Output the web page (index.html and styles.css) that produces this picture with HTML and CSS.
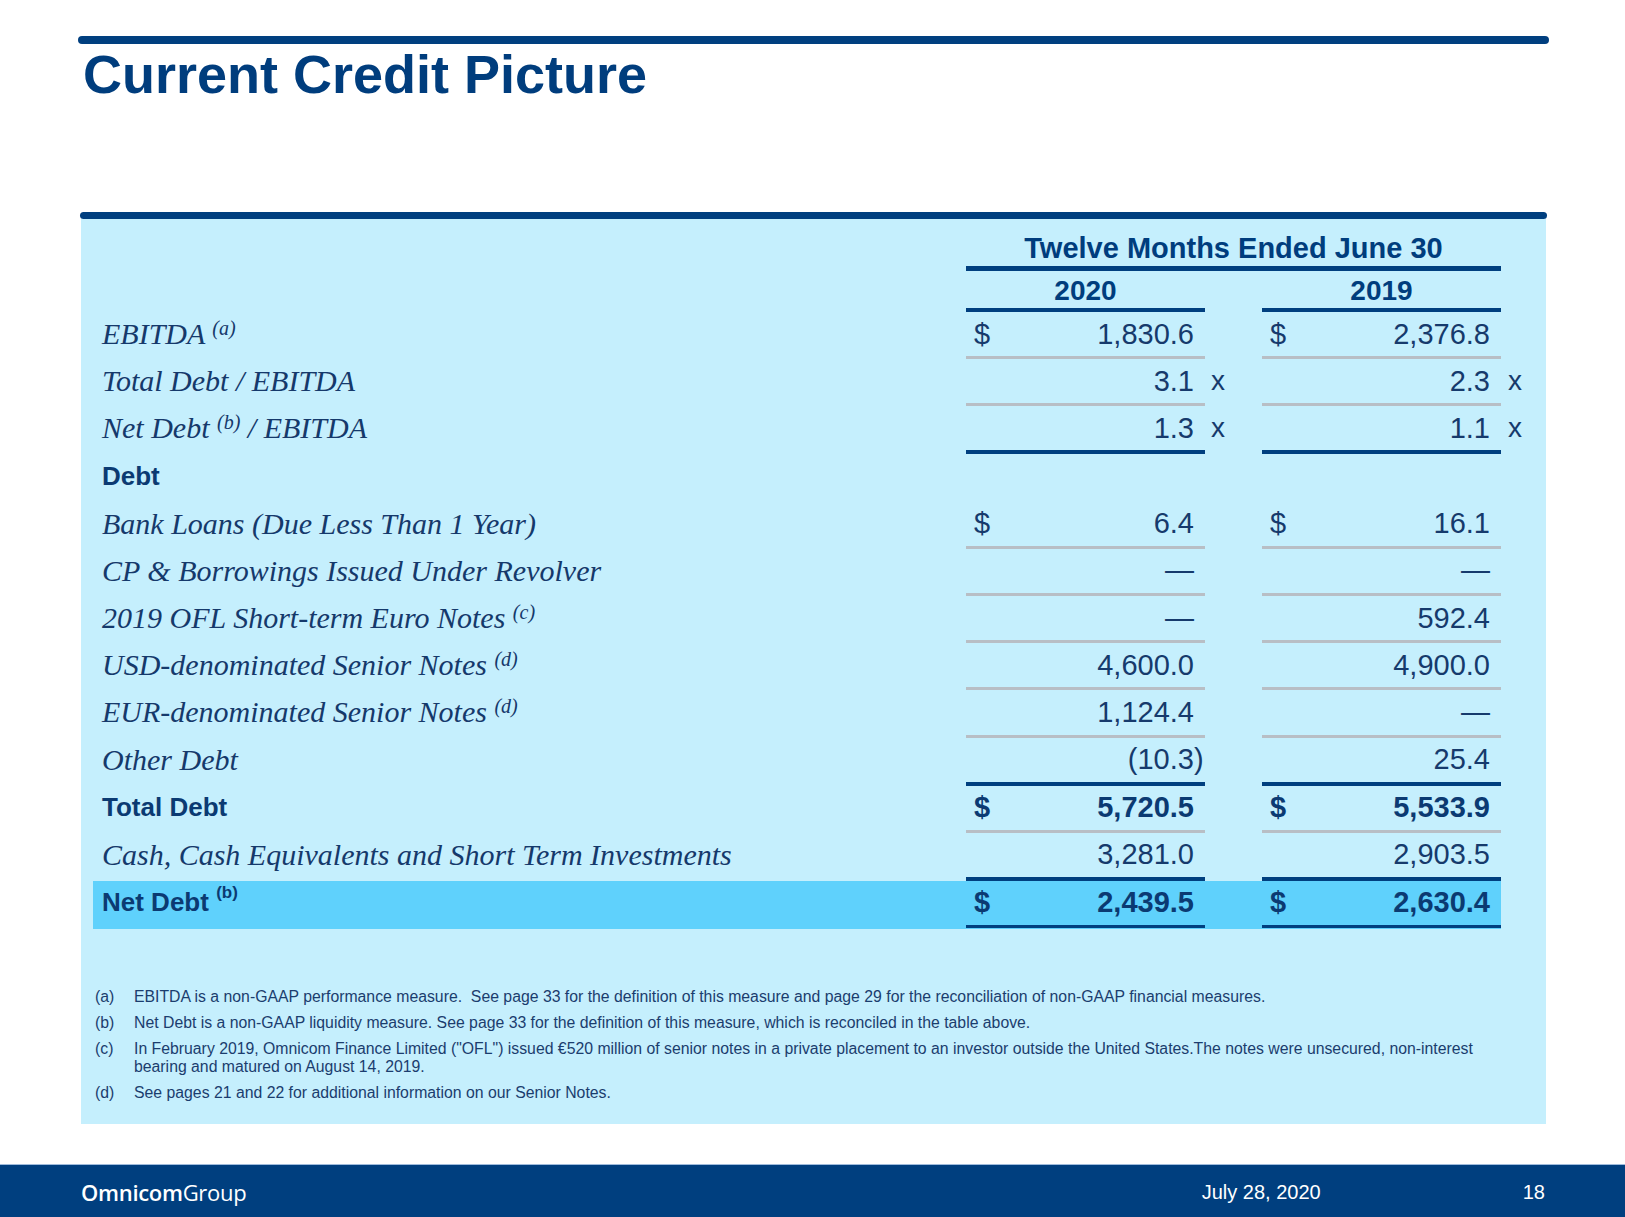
FILE: index.html
```html
<!DOCTYPE html>
<html lang="en">
<head>
<meta charset="utf-8">
<title>Current Credit Picture</title>
<link rel="stylesheet" href="styles.css">
</head>
<body>
<div class="slide">
  <div class="rule-top"></div>
  <h1 class="title">Current Credit Picture</h1>

  <div class="panel-bar"></div>
  <section class="panel">
    <div class="table">
      <div class="row head1">
        <div></div>
        <div class="period">Twelve Months Ended June 30</div>
        <div></div>
      </div>
      <div class="row head2">
        <div></div>
        <div class="yr">2020</div>
        <div></div>
        <div class="yr">2019</div>
        <div></div>
      </div>

      <div class="row">
        <div class="lbl"><span>EBITDA <sup>(a)</sup></span></div>
        <div class="num"><span>$</span><span>1,830.6</span></div>
        <div class="sfx"></div>
        <div class="num"><span>$</span><span>2,376.8</span></div>
        <div class="sfx"></div>
      </div>
      <div class="row">
        <div class="lbl"><span>Total Debt / EBITDA</span></div>
        <div class="num"><span></span><span>3.1</span></div>
        <div class="sfx">x</div>
        <div class="num"><span></span><span>2.3</span></div>
        <div class="sfx">x</div>
      </div>
      <div class="row dark">
        <div class="lbl"><span>Net Debt <sup>(b)</sup> / EBITDA</span></div>
        <div class="num"><span></span><span>1.3</span></div>
        <div class="sfx">x</div>
        <div class="num"><span></span><span>1.1</span></div>
        <div class="sfx">x</div>
      </div>
      <div class="row blank">
        <div class="lbl strong"><span>Debt</span></div>
        <div class="num"></div>
        <div class="sfx"></div>
        <div class="num"></div>
        <div class="sfx"></div>
      </div>
      <div class="row">
        <div class="lbl"><span>Bank Loans (Due Less Than 1 Year)</span></div>
        <div class="num"><span>$</span><span>6.4</span></div>
        <div class="sfx"></div>
        <div class="num"><span>$</span><span>16.1</span></div>
        <div class="sfx"></div>
      </div>
      <div class="row">
        <div class="lbl"><span>CP &amp; Borrowings Issued Under Revolver</span></div>
        <div class="num"><span></span><span>—</span></div>
        <div class="sfx"></div>
        <div class="num"><span></span><span>—</span></div>
        <div class="sfx"></div>
      </div>
      <div class="row">
        <div class="lbl"><span>2019 OFL Short-term Euro Notes <sup>(c)</sup></span></div>
        <div class="num"><span></span><span>—</span></div>
        <div class="sfx"></div>
        <div class="num"><span></span><span>592.4</span></div>
        <div class="sfx"></div>
      </div>
      <div class="row">
        <div class="lbl"><span>USD-denominated Senior Notes <sup>(d)</sup></span></div>
        <div class="num"><span></span><span>4,600.0</span></div>
        <div class="sfx"></div>
        <div class="num"><span></span><span>4,900.0</span></div>
        <div class="sfx"></div>
      </div>
      <div class="row">
        <div class="lbl"><span>EUR-denominated Senior Notes <sup>(d)</sup></span></div>
        <div class="num"><span></span><span>1,124.4</span></div>
        <div class="sfx"></div>
        <div class="num"><span></span><span>—</span></div>
        <div class="sfx"></div>
      </div>
      <div class="row dark">
        <div class="lbl"><span>Other Debt</span></div>
        <div class="num"><span></span><span>(10.3<span class="paren">)</span></span></div>
        <div class="sfx"></div>
        <div class="num"><span></span><span>25.4</span></div>
        <div class="sfx"></div>
      </div>
      <div class="row total">
        <div class="lbl strong"><span>Total Debt</span></div>
        <div class="num"><span>$</span><span>5,720.5</span></div>
        <div class="sfx"></div>
        <div class="num"><span>$</span><span>5,533.9</span></div>
        <div class="sfx"></div>
      </div>
      <div class="row dark">
        <div class="lbl"><span>Cash, Cash Equivalents and Short Term Investments</span></div>
        <div class="num"><span></span><span>3,281.0</span></div>
        <div class="sfx"></div>
        <div class="num"><span></span><span>2,903.5</span></div>
        <div class="sfx"></div>
      </div>
      <div class="row net">
        <div class="lbl strong"><span>Net Debt <sup>(b)</sup></span></div>
        <div class="num"><span>$</span><span>2,439.5</span></div>
        <div class="sfx"></div>
        <div class="num"><span>$</span><span>2,630.4</span></div>
        <div class="sfx"></div>
      </div>
    </div>

    <ol class="notes">
      <li><span class="mark">(a)</span><span>EBITDA is a non-GAAP performance measure.&nbsp; See page 33 for the definition of this measure and page 29 for the reconciliation of non-GAAP financial measures.</span></li>
      <li><span class="mark">(b)</span><span>Net Debt is a non-GAAP liquidity measure. See page 33 for the definition of this measure, which is reconciled in the table above.</span></li>
      <li><span class="mark">(c)</span><span>In February 2019, Omnicom Finance Limited ("OFL") issued €520 million of senior notes in a private placement to an investor outside the United States.The notes were unsecured, non-interest<br>bearing and matured on August 14, 2019.</span></li>
      <li><span class="mark">(d)</span><span>See pages 21 and 22 for additional information on our Senior Notes.</span></li>
    </ol>
  </section>

  <footer class="footer">
    <div class="logo"><b>Omnicom</b>Group</div>
    <div class="date">July 28, 2020</div>
    <div class="page-no">18</div>
  </footer>
</div>
</body>
</html>
```

FILE: styles.css
```css
html, body {
  margin: 0;
  padding: 0;
  background: #ffffff;
  overflow: hidden;
}

.slide {
  width: 1625px;
  height: 1217px;
  font-family: "Liberation Sans", Arial, sans-serif;
  color: #163a6c;
}

.rule-top {
  margin: 36px 0 0 78px;
  width: 1471px;
  height: 8px;
  border-radius: 4px;
  background: #003f7f;
}

.title {
  margin: 0 0 0 83px;
  font-family: "Liberation Sans", Arial, sans-serif;
  font-size: 54px;
  line-height: 60px;
  font-weight: bold;
  color: #003d7d;
}

.panel-bar {
  margin: 108px 0 0 80px;
  width: 1467px;
  height: 7px;
  border-radius: 3.5px;
  background: #003f7f;
}

.panel {
  margin-left: 81px;
  width: 1465px;
  box-sizing: border-box;
  padding: 12px 0 22px 12px;
  background: #c5effd;
}

/* ---- table ---- */
.row {
  display: grid;
  grid-template-columns: 873px 239px 57px 239px 45px;
  height: 47.2px;
}

.row > div {
  box-sizing: border-box;
  border-bottom: 3px solid transparent;
  display: flex;
  align-items: center;
  white-space: nowrap;
}

.head1 {
  grid-template-columns: 873px 535px 45px;
  height: 40px;
}
.head1 > div {
  border-bottom: 0;
}
.head1 .period {
  justify-content: center;
  align-items: flex-start;
  font-size: 29px;
  line-height: 34px;
  font-weight: bold;
  color: #003d7d;
  border-bottom: 5px solid #003f7f;
  padding-bottom: 1px;
}

.head2 {
  height: 41px;
}
.head2 > div {
  border-bottom: 0;
}
.head2 .yr {
  justify-content: center;
  align-items: flex-start;
  padding-top: 3px;
  font-size: 28px;
  line-height: 34px;
  font-weight: bold;
  color: #003d7d;
  border-bottom: 4px solid #003f7f;
}

.lbl {
  padding-left: 9px;
  font-family: "Liberation Serif", "Times New Roman", serif;
  font-style: italic;
  font-size: 30px;
  color: #15396b;
}

.lbl sup {
  font-size: 20px;
  line-height: 0;
  vertical-align: 9px;
}

.lbl.strong {
  font-family: "Liberation Sans", Arial, sans-serif;
  font-style: normal;
  font-weight: bold;
  font-size: 26px;
  color: #0b3a72;
}

.lbl.strong sup {
  font-size: 17px;
  vertical-align: 13px;
}

.num {
  justify-content: space-between;
  padding: 0 11px 0 8px;
  font-size: 29px;
  color: #163a6c;
  border-bottom-color: #b8bec5 !important;
}

.paren {
  margin-right: -9.6px;
}

.sfx {
  font-size: 28px;
  color: #163a6c;
  padding-left: 6px;
}
.row > .sfx:last-child {
  padding-left: 7px;
}

.row.dark {
  height: 48px;
}
.row.dark > div {
  border-bottom-width: 4px;
}
.row.dark > .num {
  border-bottom-color: #003f7f !important;
}

.row.blank > .num {
  border-bottom-color: transparent !important;
}

.row.total .num,
.row.net .num {
  font-weight: bold;
  color: #0b3a72;
}

.row.net > div:not(:last-child) {
  background: #5fd1fc;
  box-shadow: 0 1px 0 #5fd1fc;
}
.row.net > .num {
  border-bottom-color: #003f7f !important;
  box-shadow: 0 1px 0 #5fd1fc, 0 3px 0 #003f7f;
}

/* ---- footnotes ---- */
.notes {
  list-style: none;
  margin: 60px 0 0 2px;
  padding: 0;
  font-size: 15.8px;
  line-height: 18px;
  color: #1b3d6e;
}

.notes li {
  display: flex;
  margin-bottom: 8px;
}
.notes li:last-child {
  margin-bottom: 0;
}

.notes .mark {
  flex: 0 0 39px;
}

/* ---- footer ---- */
.footer {
  margin-top: 40px;
  height: 53px;
  box-sizing: border-box;
  border-top: 1px solid #9fbbdc;
  background: #003f7f;
  color: #ffffff;
  display: flex;
  align-items: center;
  padding: 3px 80px 0 81px;
}

.logo {
  flex: 1;
  font-family: "Open Sans", "Noto Sans", sans-serif;
  font-size: 22px;
  letter-spacing: -0.3px;
}
.logo b {
  font-weight: 600;
}

.date {
  width: 321px;
  font-size: 20px;
}

.page-no {
  font-size: 20px;
}
```
